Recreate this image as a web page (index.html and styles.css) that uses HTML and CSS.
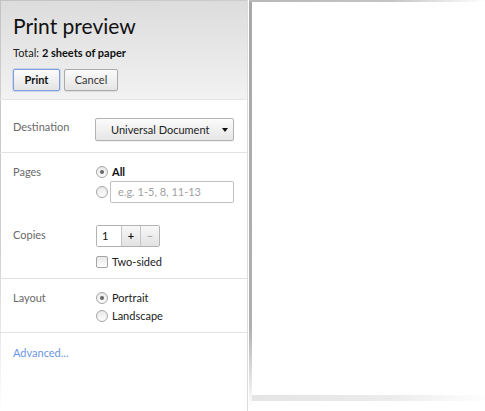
FILE: index.html
```html
<!DOCTYPE html>
<html>
<head>
<meta charset="utf-8">
<link rel="stylesheet" href="styles.css">
</head>
<body>
<div class="window">
  <aside class="sidebar">
    <header class="header">
      <h1 class="title">Print preview</h1>
      <div class="summary">Total: <b>2 sheets of paper</b></div>
      <div class="buttons">
        <button class="btn btn-primary">Print</button>
        <button class="btn btn-cancel">Cancel</button>
      </div>
    </header>

    <section class="section sec-dest">
      <div class="label">Destination</div>
      <div class="controls">
        <div class="select"><span class="select-text">Universal Document</span><span class="caret"></span></div>
      </div>
    </section>

    <section class="section sec-pages">
      <div class="label">Pages</div>
      <div class="controls">
        <div class="row"><span class="radio checked"></span><span class="opt bold">All</span></div>
        <div class="row row-input"><span class="radio"></span><span class="textbox">e.g. 1-5, 8, 11-13</span></div>
      </div>
    </section>

    <section class="section sec-copies">
      <div class="label">Copies</div>
      <div class="controls">
        <div class="stepper"><span class="num">1</span><span class="step plus">+</span><span class="step minus">–</span></div>
        <div class="row row-check"><span class="check"></span><span class="opt">Two-sided</span></div>
      </div>
    </section>

    <section class="section sec-layout">
      <div class="label">Layout</div>
      <div class="controls">
        <div class="row"><span class="radio checked"></span><span class="opt">Portrait</span></div>
        <div class="row row-second"><span class="radio"></span><span class="opt">Landscape</span></div>
      </div>
    </section>

    <div class="advanced"><a class="link">Advanced...</a></div>
  </aside>
  <main class="preview"></main>
</div>
</body>
</html>
```

FILE: styles.css
```css
html, body {
  margin: 0;
  padding: 0;
  background: #fff;
}
body {
  font-family: Lato, "Open Sans", sans-serif;
  font-size: 11px;
  color: #222;
}
.window {
  display: flex;
  width: 485px;
  height: 411px;
  overflow: hidden;
}
.sidebar {
  width: 247px;
  flex: none;
  border-right: 1px solid #dcdcdc;
  display: flex;
  flex-direction: column;
  background:
    linear-gradient(to bottom, #c2c2c2 0%, #cfcfcf 60%, #ffffff 100%) left top / 1px 100% no-repeat,
    #fff;
}
.header {
  padding: 14px 13px 0 13px;
  height: 85px;
  border-bottom: 1px solid #e6e6e6;
  background:
    linear-gradient(to right, #c2c2c2, #cdcdcd) left top / 100% 1px no-repeat,
    linear-gradient(to bottom, #c2c2c2, #cfcfcf) left top / 1px 100% no-repeat,
    linear-gradient(to bottom, #dcdcdc 0%, #f2f2f2 100%);
}
.title {
  margin: 0;
  font-size: 21px;
  line-height: 24px;
  font-weight: normal;
  color: #111;
}
.summary {
  margin-top: 7px;
  line-height: 16px;
  color: #222;
}
.summary b { font-weight: bold; color: #111; }
.buttons {
  display: flex;
  gap: 4px;
  margin-top: 8px;
}
.btn {
  font-family: inherit;
  font-size: 11px;
  height: 22px;
  padding: 0;
  border: 1px solid #aaa;
  border-radius: 2px;
  color: #333;
  background: linear-gradient(to bottom, #fbfbfb, #e4e4e4);
  box-shadow: 0 1px 1px rgba(0,0,0,0.08);
  line-height: 18px;
}
.btn-primary {
  width: 47px;
  font-weight: bold;
  color: #111;
  border-color: #7e9ee0;
  box-shadow: 0 0 0 1px rgba(140,170,230,0.35);
}
.btn-cancel { width: 54px; }

.section {
  display: grid;
  grid-template-columns: 82px 1fr;
  padding: 0 13px;
}
.label {
  color: #6a6a6a;
  line-height: 16px;
  white-space: nowrap;
}
.controls {
  display: flex;
  flex-direction: column;
}
.sec-dest {
  padding-top: 18px;
  padding-bottom: 11px;
  border-bottom: 1px solid #e2e2e2;
}
.sec-dest .label { margin-top: 1px; }
.select {
  height: 21px;
  border: 1px solid #b3b3b3;
  border-radius: 2px;
  background: linear-gradient(to bottom, #fbfbfb, #e6e6e6);
  display: flex;
  align-items: center;
  padding: 0 0 0 15px;
  color: #222;
  box-shadow: 0 1px 1px rgba(0,0,0,0.06);
  white-space: nowrap;
}
.select-text { flex: 1; line-height: 16px; }
.caret {
  width: 0;
  height: 0;
  border-left: 3.5px solid transparent;
  border-right: 3.5px solid transparent;
  border-top: 4px solid #111;
  margin-right: 5px;
}
.sec-pages { padding-top: 11px; }
.row {
  display: flex;
  align-items: center;
  height: 16px;
  white-space: nowrap;
}
.row-input { height: 22px; margin-top: 1px; }
.radio {
  width: 10px;
  height: 10px;
  border: 1px solid #a5a5a5;
  border-radius: 50%;
  margin-left: 1px;
  background: linear-gradient(to bottom, #e8e8e8, #fdfdfd);
  display: flex;
  align-items: center;
  justify-content: center;
  flex: none;
}
.radio.checked::after {
  content: "";
  width: 4px;
  height: 4px;
  border-radius: 50%;
  background: #666;
}
.opt { margin-left: 4px; line-height: 16px; color: #222; }
.bold { font-weight: bold; color: #111; }
.textbox {
  margin-left: 2px;
  flex: 1;
  height: 20px;
  border: 1px solid #c0c0c0;
  border-radius: 2px;
  color: #a0a0a0;
  padding-left: 7px;
  line-height: 20px;
  background: #fff;
}
.sec-copies { padding-top: 22px; padding-bottom: 8px; border-bottom: 1px solid #e2e2e2; }
.sec-copies .label { margin-top: 2px; }
.stepper {
  display: flex;
  width: 62px;
  height: 20px;
  margin-left: 1px;
  border: 1px solid #b3b3b3;
  border-radius: 2px;
  overflow: hidden;
}
.num {
  width: 19px;
  padding-left: 5px;
  line-height: 20px;
  background: #fff;
  color: #111;
}
.step {
  width: 18px;
  border-left: 1px solid #c4c4c4;
  text-align: center;
  line-height: 20px;
  background: linear-gradient(to bottom, #f8f8f8, #e2e2e2);
}
.plus { font-weight: bold; color: #111; }
.minus { color: #999; }
.row-check { margin-top: 7px; }
.check {
  width: 10px;
  height: 10px;
  border: 1px solid #a5a5a5;
  border-radius: 2px;
  margin-left: 1px;
  background: linear-gradient(to bottom, #e8e8e8, #fdfdfd);
  flex: none;
}
.sec-layout { padding-top: 11px; padding-bottom: 8px; border-bottom: 1px solid #e2e2e2; }
.row-second { margin-top: 2px; }
.advanced {
  padding: 12px 13px 0 13px;
  line-height: 16px;
}
.link { color: #6b98e2; cursor: pointer; }

.preview {
  flex: 1;
  background:
    linear-gradient(to right, #b8b8b8 0%, #c4c4c4 60%, #ffffff 100%) 1px 0 / 100% 2px no-repeat,
    linear-gradient(to bottom, #a8a8a8 0%, #b0b0b0 80%, #ffffff 99%) 1px 0 / 3px 100% no-repeat,
    linear-gradient(to right, #e4e4e4 0%, #ececec 60%, #ffffff 100%) 4px 395px / 100% 6px no-repeat,
    #fff;
}
```
